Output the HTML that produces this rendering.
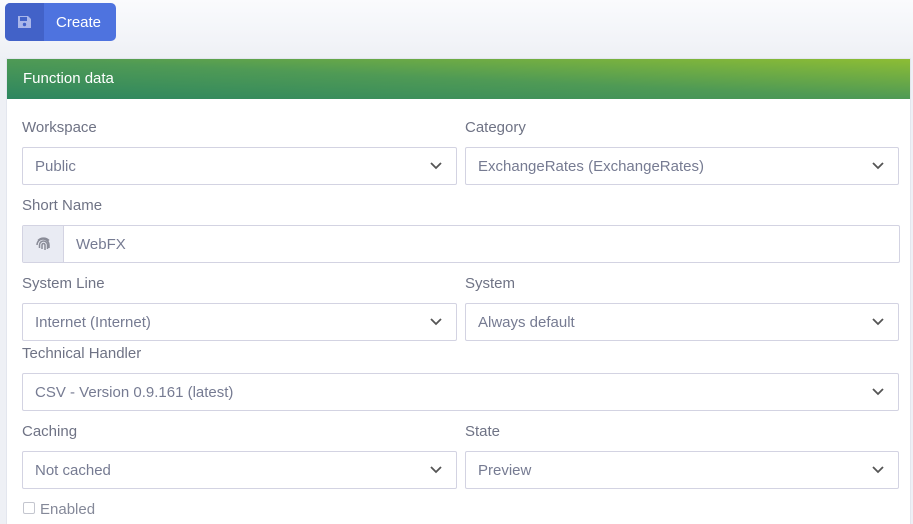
<!DOCTYPE html>
<html style="width:913px;height:524px;overflow:hidden"><head><style>
*{box-sizing:border-box;margin:0;padding:0}
body{width:913px;height:524px;overflow:hidden;background:linear-gradient(#fafbfd,#eef0f5 60px);font-family:"Liberation Sans",sans-serif;position:relative}
.btn{position:absolute;left:5px;top:3px;width:111px;height:38px;border-radius:5px;background:#4e73df;overflow:hidden;color:#fff;font-size:15px}
.btn .ic{position:absolute;left:0;top:0;width:39px;height:38px;background:#4262c8}
.btn span{position:absolute;left:51px;top:11px}
.card{position:absolute;left:6px;top:58px;width:905px;height:470px;background:#fff;border:1px solid #e3e6ee}
.hd{height:40px;background:linear-gradient(to top right,#2d8660,#4f9a55 50%,#8dbd34);color:#fff;font-size:15px;padding:11px 0 0 16px}
.lbl{position:absolute;font-size:15px;color:#6f7385}
.f{position:absolute;height:38px;border:1px solid #d3d3e2;border-radius:2px;font-size:15px;color:#767b92;padding:10px 0 0 12px;background:#fff}
.f svg{position:absolute;right:14px;top:14px}
</style></head><body>
<div class="btn"><div class="ic"><svg width="39" height="38" viewBox="0 0 39 38"><path d="M13 13h10l3 3v9h-13z" fill="#a9b6ea"/><rect x="15" y="14" width="7" height="4" fill="#4262c8"/><circle cx="19.5" cy="21.5" r="1.7" fill="#4262c8"/></svg></div><span>Create</span></div>
<div class="card"><div class="hd">Function data</div></div>
<div class="lbl" style="left:22px;top:119px">Workspace</div>
<div class="lbl" style="left:465px;top:119px">Category</div>
<div class="f" style="left:22px;top:147px;width:435px">Public<svg width="12" height="8"><path d="M1 1l5 5 5-5" stroke="#555" stroke-width="1.8" fill="none"/></svg></div>
<div class="f" style="left:465px;top:147px;width:434px">ExchangeRates (ExchangeRates)<svg width="12" height="8"><path d="M1 1l5 5 5-5" stroke="#555" stroke-width="1.8" fill="none"/></svg></div>
<div class="lbl" style="left:22px;top:197px">Short Name</div>
<div class="f" style="left:22px;top:225px;width:878px;padding-left:53px">WebFX</div>
<div style="position:absolute;left:23px;top:226px;width:41px;height:36px;background:#e9ebf3;border-right:1px solid #d3d3e2"><svg width="41" height="36" viewBox="0 0 41 36" fill="none" stroke="#8a8c98" stroke-width="1.5"><path d="M14 19a6 6 0 0 1 12 0v3M16.5 22v-3a4 4 0 0 1 8 0v4M19 23v-4a1.5 1.5 0 0 1 3 0v5M15 14.5a7.5 7.5 0 0 1 11 0"/></svg></div>
<div class="lbl" style="left:22px;top:275px">System Line</div>
<div class="lbl" style="left:465px;top:275px">System</div>
<div class="f" style="left:22px;top:303px;width:435px">Internet (Internet)<svg width="12" height="8"><path d="M1 1l5 5 5-5" stroke="#555" stroke-width="1.8" fill="none"/></svg></div>
<div class="f" style="left:465px;top:303px;width:434px">Always default<svg width="12" height="8"><path d="M1 1l5 5 5-5" stroke="#555" stroke-width="1.8" fill="none"/></svg></div>
<div class="lbl" style="left:22px;top:345px">Technical Handler</div>
<div class="f" style="left:22px;top:373px;width:877px">CSV - Version 0.9.161 (latest)<svg width="12" height="8"><path d="M1 1l5 5 5-5" stroke="#555" stroke-width="1.8" fill="none"/></svg></div>
<div class="lbl" style="left:22px;top:423px">Caching</div>
<div class="lbl" style="left:465px;top:423px">State</div>
<div class="f" style="left:22px;top:451px;width:435px">Not cached<svg width="12" height="8"><path d="M1 1l5 5 5-5" stroke="#555" stroke-width="1.8" fill="none"/></svg></div>
<div class="f" style="left:465px;top:451px;width:434px">Preview<svg width="12" height="8"><path d="M1 1l5 5 5-5" stroke="#555" stroke-width="1.8" fill="none"/></svg></div>
<div style="position:absolute;left:23px;top:502px;width:12px;height:12px;border:1px solid #c4c6cf;border-radius:2px"></div>
<div class="lbl" style="left:40px;top:501px;color:#858999">Enabled</div>
</body></html>
